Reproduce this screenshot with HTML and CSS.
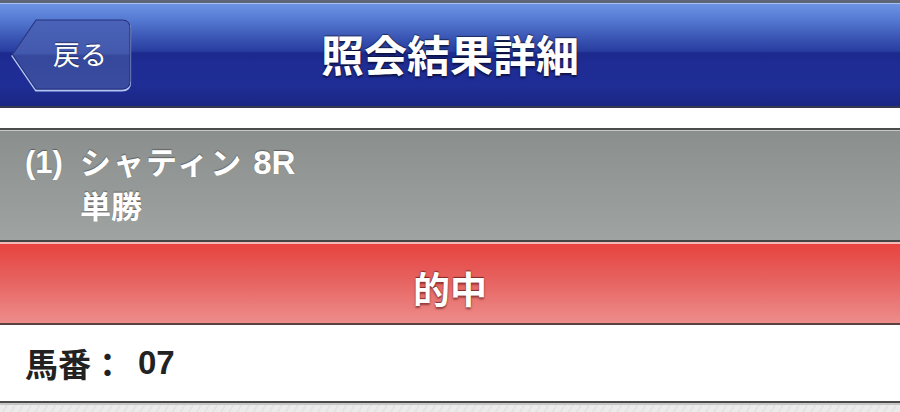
FILE: index.html
```html
<!DOCTYPE html>
<html lang="ja">
<head>
<meta charset="utf-8">
<title>照会結果詳細</title>
<link rel="stylesheet" href="styles.css">
</head>
<body>
<div class="topline"></div>
<header class="navbar">
  <div class="nav-left">
    <a class="back-btn" href="#">
      <svg class="back-shape" width="122" height="74" viewBox="0 0 122 74">
        <defs>
          <linearGradient id="bg" x1="0" y1="0" x2="0" y2="1">
            <stop offset="0" stop-color="#4a63b8"/>
            <stop offset="0.48" stop-color="#4359ad"/>
            <stop offset="0.52" stop-color="#36489c"/>
            <stop offset="1" stop-color="#3a4c9f"/>
          </linearGradient>
        </defs>
        <path d="M25,2.5 H111 Q119,2.5 119,10.5 V63.5 Q119,71.5 111,71.5 H25 L1.5,37 Z" fill="none" stroke="#b4c4f2" stroke-width="2.2"/>
        <path d="M25,1 H111 Q119,1 119,9 V62 Q119,70 111,70 H25 L1.5,35.5 Z" fill="url(#bg)" stroke="#26337e" stroke-width="1.2"/>
      </svg>
      <span class="back-label">戻る</span>
    </a>
  </div>
  <h1 class="title">照会結果詳細</h1>
  <div class="nav-right"></div>
</header>
<div class="spacer"></div>
<section class="race">
  <div class="race-no">(1)</div>
  <div class="race-info">
    <div class="race-line"><span class="kana">シャティン</span><span class="race-num">8R</span></div>
    <div class="race-line">単勝</div>
  </div>
</section>
<section class="result">的中</section>
<section class="detail-row">
  <span class="detail-label">馬番：</span><span class="detail-value">07</span>
</section>
<div class="footer-bg"></div>
</body>
</html>
```

FILE: styles.css
```css
* { box-sizing: border-box; }
html, body { margin: 0; padding: 0; }
body {
  width: 900px;
  height: 412px;
  overflow: hidden;
  font-family: "Liberation Sans", "Noto Sans CJK JP", sans-serif;
  background: #ececec;
}
.topline {
  height: 3px;
  background: #5d6577;
}
.navbar {
  height: 105px;
  display: grid;
  grid-template-columns: 1fr auto 1fr;
  align-items: center;
  border-top: 1px solid #a9bff0;
  border-bottom: 2px solid #363a4c;
  background: linear-gradient(to bottom,
    #6d93e4 0px,
    #5479d2 16px,
    #3a55b4 34px,
    #283ea0 47px,
    #1c2a8e 49px,
    #1e2c94 60px,
    #1f2e96 80px,
    #1b2783 102px);
}
.nav-left {
  padding-left: 11px;
  display: flex;
  align-items: center;
}
.back-btn {
  position: relative;
  width: 122px;
  height: 74px;
  display: flex;
  align-items: center;
  justify-content: center;
  padding-left: 16px;
  padding-bottom: 6px;
  text-decoration: none;
  margin-top: 2px;
}
.back-shape {
  position: absolute;
  left: 0;
  top: 0;
}
.back-label {
  position: relative;
  color: #ffffff;
  font-size: 27px;
  font-family: "Noto Sans CJK JP", sans-serif;
  font-weight: 400;
  text-shadow: 0 -1px 1px rgba(0,0,0,0.4);
}
.title {
  margin: 0;
  color: #ffffff;
  font-family: "Noto Sans CJK JP", sans-serif;
  font-weight: 700;
  font-size: 43px;
  letter-spacing: 0;
  line-height: 1;
  padding-bottom: 4px;
  text-shadow: 0 -1px 1px rgba(0,0,0,0.5), 0 2px 2px rgba(0,0,20,0.6);
}
.spacer {
  height: 20px;
  background: #ffffff;
}
.race {
  display: flex;
  border-top: 2px solid #4a4d4c;
  border-bottom: 2px solid #434544;
  box-shadow: inset 0 1px 0 #c4c8c6;
  padding: 11px 0 10px 25px;
  background: linear-gradient(to bottom, #8a8e8c, #9fa3a1);
  color: #ffffff;
  font-weight: 700;
  font-size: 31px;
  line-height: 44px;
  text-shadow: 0 -1px 1px rgba(0,0,0,0.35);
}
.race-no {
  width: 55px;
}
.kana {
  letter-spacing: 2px;
  margin-right: 10px;
}
.race-num {
  font-size: 33px;
}
.result {
  height: 83px;
  display: flex;
  align-items: center;
  justify-content: center;
  padding-top: 8px;
  border-top: 2px solid #f3b8b6;
  border-bottom: 2px solid #5a4242;
  background: linear-gradient(to bottom, #e8433f, #e6625f 45%, #ed8d8b);
  color: #ffffff;
  font-family: "Noto Sans CJK JP", sans-serif;
  font-weight: 700;
  font-size: 37px;
  text-shadow: 0 -1px 1px rgba(60,0,0,0.6), 0 2px 2px rgba(60,0,0,0.5);
}
.detail-row {
  height: 78px;
  display: flex;
  align-items: center;
  padding-left: 25px;
  background: #ffffff;
  border-bottom: 2px solid #4b4b4b;
  color: #222222;
  font-weight: 700;
  font-size: 33px;
}
.detail-label {
  font-family: "Noto Sans CJK JP", sans-serif;
  letter-spacing: 0;
  margin-right: 14px;
}
.detail-value {
  font-family: "Liberation Sans", sans-serif;
}
.footer-bg {
  height: 20px;
  border-top: 2px solid #c6c6c6;
  background: repeating-linear-gradient(120deg, #ebebeb 0px, #ebebeb 5px, #e3e3e3 5px, #e3e3e3 7px);
}
```
